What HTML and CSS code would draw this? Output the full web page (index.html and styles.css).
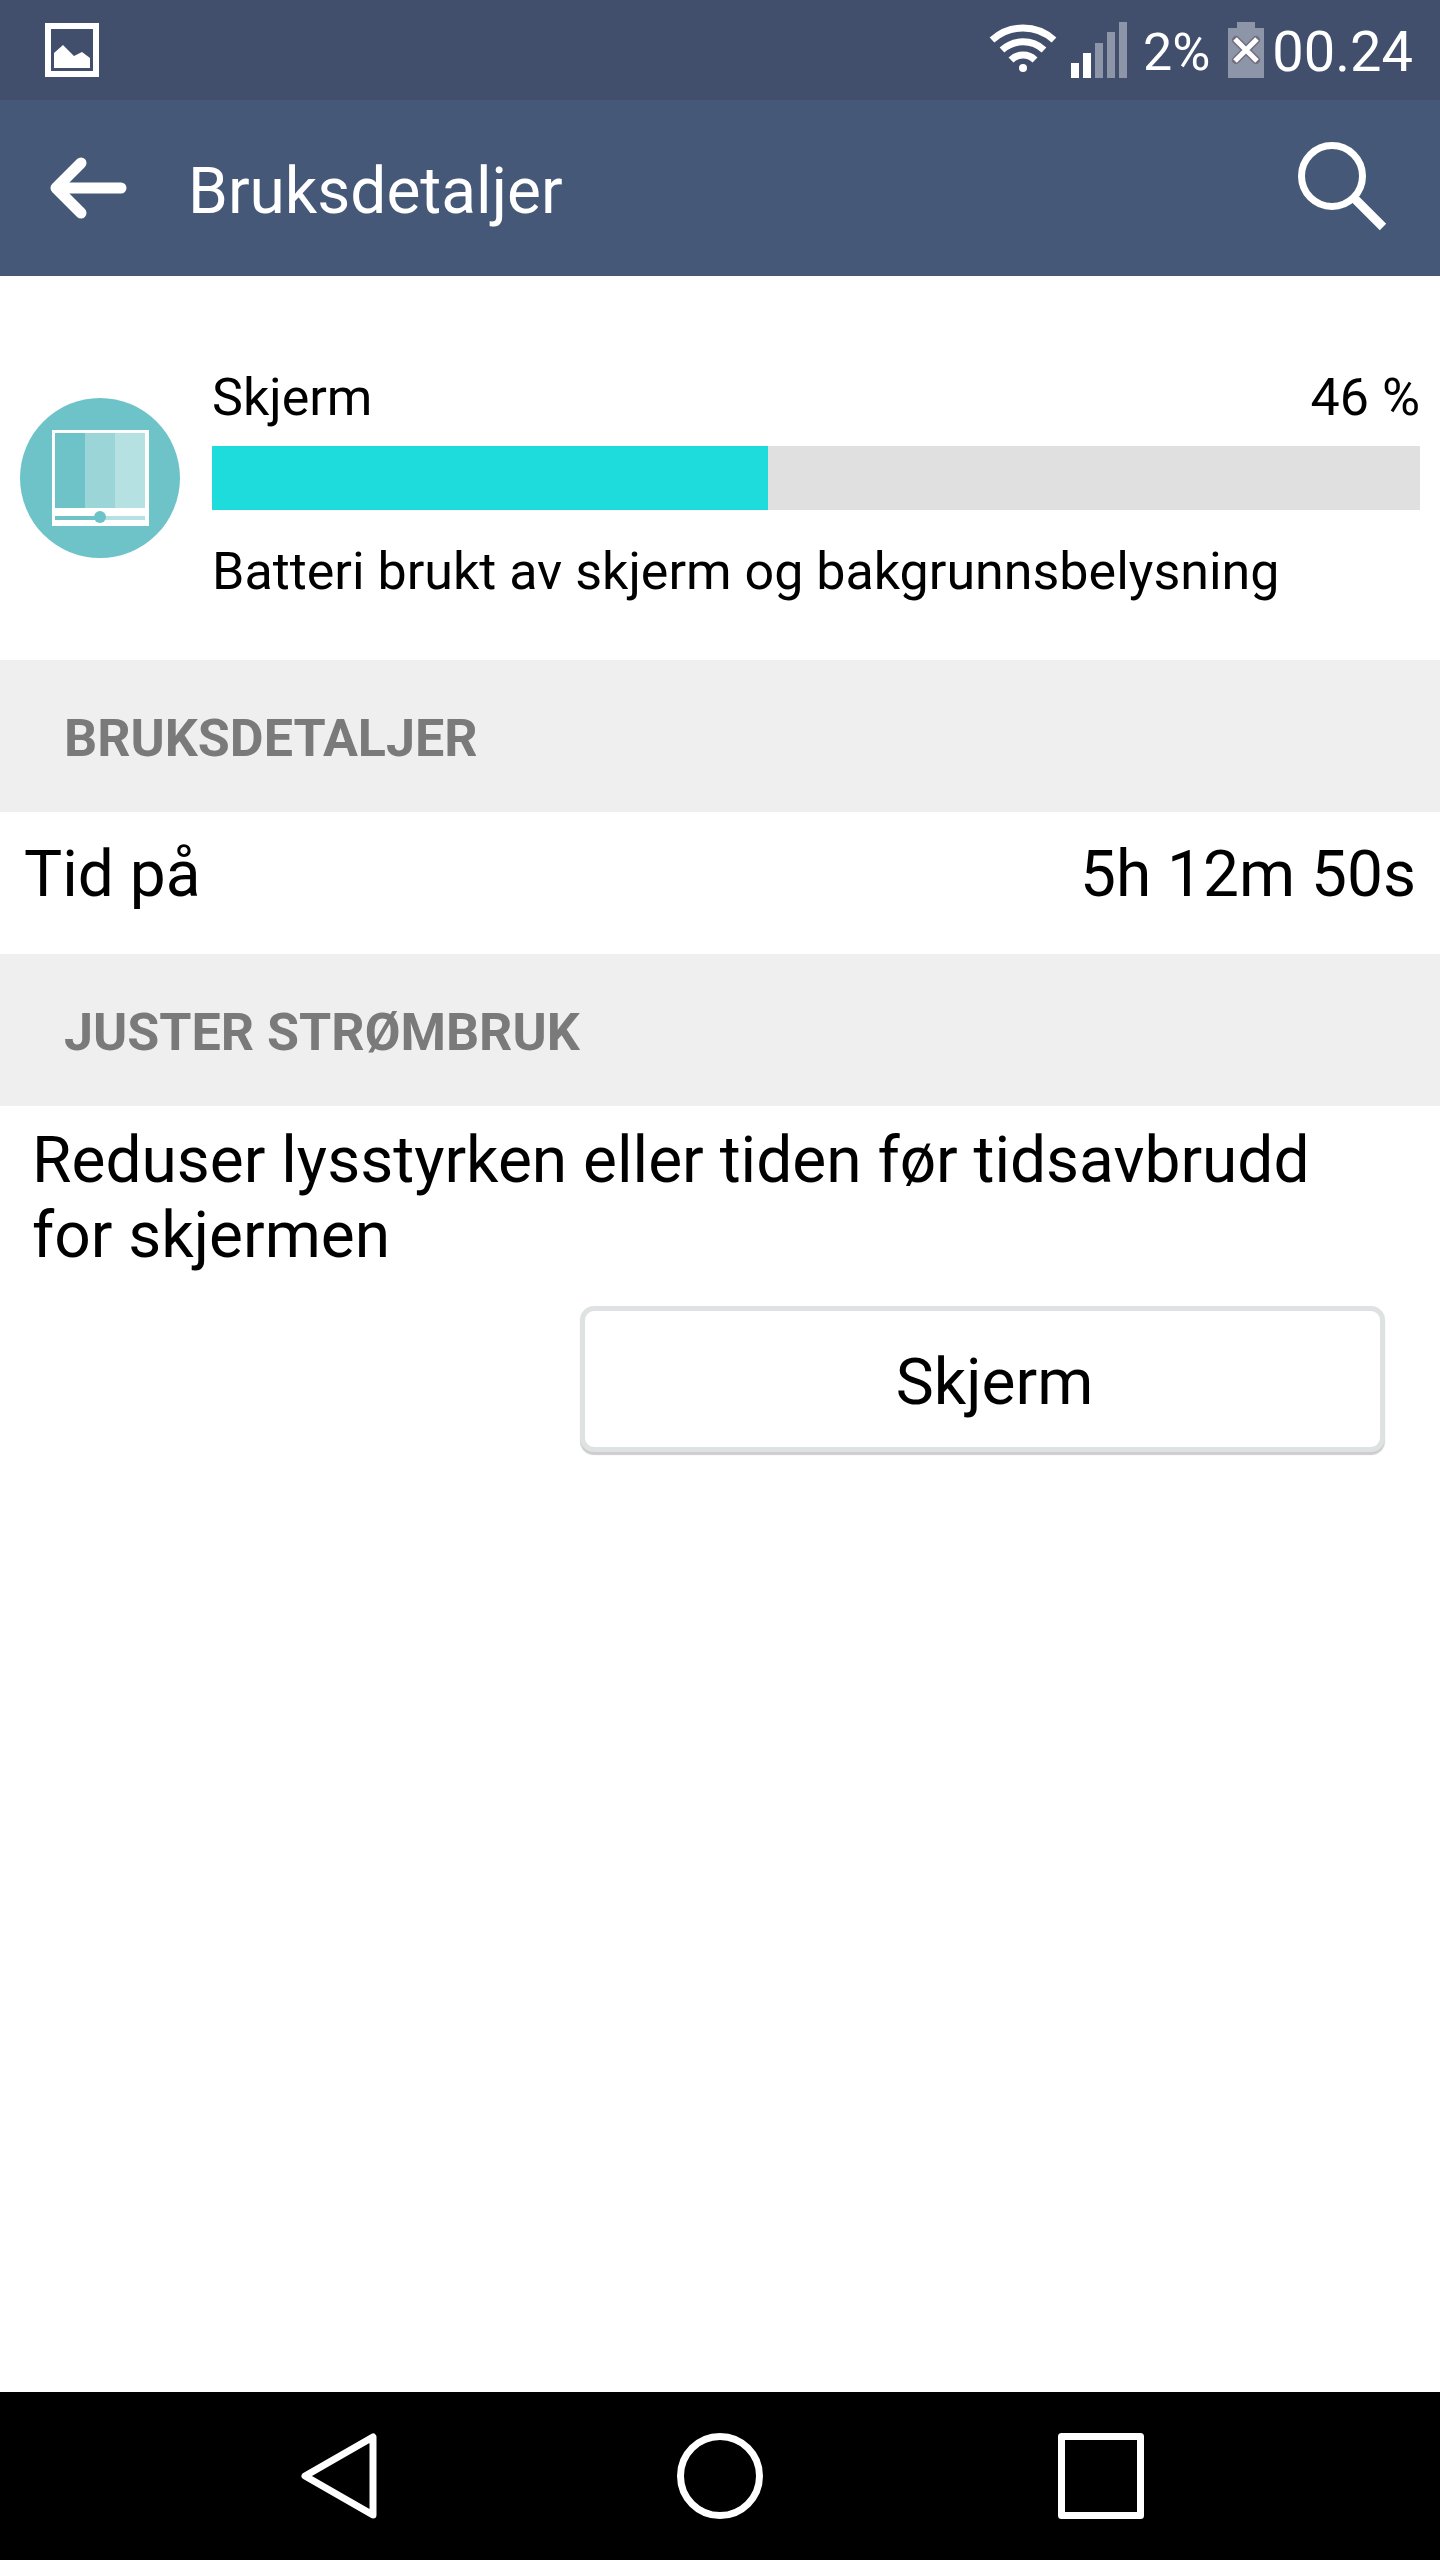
FILE: index.html
```
<!DOCTYPE html>
<html lang="nb">
<head>
<meta charset="utf-8">
<meta name="viewport" content="width=device-width, initial-scale=1">
<title>Bruksdetaljer</title>
<link rel="stylesheet" href="styles.css">
</head>
<body>
<div class="screen">
  <div class="status-bar">
    <svg class="status-picture" width="54" height="54" viewBox="0 0 54 54" aria-hidden="true">
      <path fill="#fff" fill-rule="evenodd" d="M0 0h54v54H0zM6 6v42h42V6z"/>
      <path fill="#fff" d="M9 30l9-8 11 11 8-4 8 6v10H9z"/>
    </svg>
    <svg class="status-wifi" width="68" height="56" viewBox="0 0 68 56" aria-hidden="true">
      <g fill="none" stroke="#fff" stroke-width="7">
        <path d="M3 18a46 46 0 0 1 62 0"/>
        <path d="M13 28a31 31 0 0 1 42 0"/>
        <path d="M22 38a17 17 0 0 1 24 0"/>
      </g>
      <circle cx="34" cy="46" r="4" fill="#fff"/>
    </svg>
    <svg class="status-signal" width="56" height="56" viewBox="0 0 56 56" aria-hidden="true">
      <path fill="#fff" d="M0 41h8v15H0zM12 31h8v25h-8z"/>
      <path fill="#8d95a8" d="M24 21h8v35h-8zM36 10h8v46h-8zM48 0h8v56h-8z"/>
    </svg>
    <span class="status-level">2%</span>
    <svg class="status-battery" width="36" height="56" viewBox="0 0 36 56" aria-hidden="true">
      <path fill="#8d95a8" d="M9 0h18v6h9v50H0V6h9z"/>
      <path stroke="#706f80" stroke-width="8" stroke-linecap="round" d="M8 18l20 20M28 18L8 38"/>
      <path stroke="#fff" stroke-width="5" d="M7 17l22 22M29 17L7 39"/>
    </svg>
    <time class="status-clock" datetime="00:24">00.24</time>
  </div>

  <header class="app-bar">
    <button class="icon-button" type="button" aria-label="Tilbake">
      <svg width="78" height="64" viewBox="0 0 78 64" aria-hidden="true">
        <path fill="none" stroke="#fff" stroke-width="11" stroke-linecap="round" stroke-linejoin="round" d="M31 7L6 32l25 25M8 32h63"/>
      </svg>
    </button>
    <h1 class="app-title">Bruksdetaljer</h1>
    <button class="icon-button" type="button" aria-label="Søk">
      <svg width="90" height="92" viewBox="0 0 90 92" aria-hidden="true">
        <circle cx="34" cy="34" r="30.5" fill="none" stroke="#fff" stroke-width="7"/>
        <path stroke="#fff" stroke-width="9" stroke-linejoin="round" d="M56 56l29 29"/>
      </svg>
    </button>
  </header>

  <main class="content">
    <section class="usage">
      <svg class="usage-icon" width="160" height="160" viewBox="0 0 160 160" aria-hidden="true">
        <circle cx="80" cy="80" r="80" fill="#6ec3c8"/>
        <path fill="#fff" d="M32 32h97v96H32z"/>
        <path fill="#6ec3c8" d="M35 35h30v75H35z"/>
        <path fill="#9bd5d8" d="M65 35h30v75H65z"/>
        <path fill="#b5e1e3" d="M95 35h30v75H95zM80 118h45v4H80z"/>
        <path fill="#6ec3c8" d="M35 118h45v4H35z"/>
        <circle cx="80" cy="119" r="6" fill="#6ec3c8"/>
      </svg>
      <div class="usage-body">
        <div class="usage-head">
          <label for="usage-level">Skjerm</label>
          <span>46 %</span>
        </div>
        <progress class="usage-level" id="usage-level" max="100" value="46"></progress>
        <p class="usage-note">Batteri brukt av skjerm og bakgrunnsbelysning</p>
      </div>
    </section>

    <h2 class="section-title">BRUKSDETALJER</h2>
    <dl class="detail">
      <dt>Tid på</dt>
      <dd>5h 12m 50s</dd>
    </dl>

    <h2 class="section-title">JUSTER STRØMBRUK</h2>
    <section class="adjust">
      <p class="adjust-text">Reduser lysstyrken eller tiden før tidsavbrudd for skjermen</p>
      <button class="adjust-button" type="button">Skjerm</button>
    </section>
  </main>

  <nav class="nav-bar" aria-label="Systemnavigasjon">
    <button class="icon-button" type="button" aria-label="Tilbake">
      <svg width="88" height="88" viewBox="0 0 88 88" aria-hidden="true">
        <path fill="none" stroke="#fff" stroke-width="7" stroke-linejoin="round" d="M78 5v78L10 44z"/>
      </svg>
    </button>
    <button class="icon-button" type="button" aria-label="Hjem">
      <svg width="88" height="88" viewBox="0 0 88 88" aria-hidden="true">
        <circle cx="44" cy="44" r="39.5" fill="none" stroke="#fff" stroke-width="7"/>
      </svg>
    </button>
    <button class="icon-button" type="button" aria-label="Oversikt">
      <svg width="88" height="88" viewBox="0 0 88 88" aria-hidden="true">
        <rect x="4.5" y="4.5" width="79" height="79" fill="none" stroke="#fff" stroke-width="7" stroke-linejoin="round"/>
      </svg>
    </button>
  </nav>
</div>
</body>
</html>
```

FILE: styles.css
```
* {
  box-sizing: border-box;
  margin: 0;
}

body {
  background: #fff;
  color: #000;
  font-family: Roboto, "Noto Sans", sans-serif;
  font-size: 52px;
  line-height: 61px;
}

svg {
  display: block;
  flex: none;
}

.screen {
  display: flex;
  flex-direction: column;
  min-height: 100vh;
}

.icon-button {
  display: flex;
  padding: 0;
  border: 0;
  background: none;
  cursor: pointer;
}

/* Status bar */
.status-bar {
  display: flex;
  align-items: center;
  height: 100px;
  padding: 0 27px 0 45px;
  background: #414f6d;
  color: #fff;
}

.status-picture {
  margin-right: auto;
}

.status-signal {
  margin: 0 16px 0 14px;
}

.status-battery {
  margin: 0 8px 0 18px;
}

.status-level {
  padding-top: 4px;
}

.status-clock {
  padding-top: 4px;
  font-size: 56px;
}

/* App bar */
.app-bar {
  display: flex;
  align-items: center;
  height: 176px;
  padding: 0 52px 0 50px;
  background: #455878;
  color: #fff;
}

.app-title {
  flex: 1;
  margin-left: 60px;
  padding-top: 6px;
  font-size: 64px;
  font-weight: 400;
  line-height: 75px;
}

/* Usage summary */
.content {
  flex: 1;
}

.usage {
  display: flex;
  gap: 32px;
  padding: 91px 20px 58px;
}

.usage-icon {
  margin-top: 31px;
}

.usage-body {
  flex: 1;
}

.usage-head {
  display: flex;
  justify-content: space-between;
}

.usage-level {
  display: block;
  width: 100%;
  height: 64px;
  margin: 18px 0 31px;
  border: 0;
  background: #e0e0e0;
  appearance: none;
}

.usage-level::-webkit-progress-bar {
  background: #e0e0e0;
}

.usage-level::-webkit-progress-value {
  background: #1fdcdc;
}

.usage-level::-moz-progress-bar {
  background: #1fdcdc;
}

/* Sections */
.section-title {
  padding: 48px 64px 43px;
  background: #efefef;
  color: #7a7a7a;
  font-size: 52px;
  font-weight: 700;
  line-height: 61px;
}

.detail {
  display: flex;
  justify-content: space-between;
  padding: 25px 24px 42px;
  font-size: 64px;
  line-height: 75px;
}

.adjust {
  display: flex;
  flex-direction: column;
  padding: 17px 55px 64px 32px;
  font-size: 64px;
  line-height: 75px;
}

.adjust-button {
  height: 146px;
  margin: 33px 0 0 548px;
  padding: 6px 0 0 24px;
  border: 5px solid #dee2e2;
  border-radius: 14px;
  background: #fff;
  box-shadow: 0 3px 1px #cdcdcd;
  color: inherit;
  font: inherit;
  cursor: pointer;
}

/* Navigation bar */
.nav-bar {
  display: grid;
  grid-template-columns: repeat(3, 1fr);
  place-items: center;
  height: 168px;
  padding: 0 148px;
  background: #000;
}
```
